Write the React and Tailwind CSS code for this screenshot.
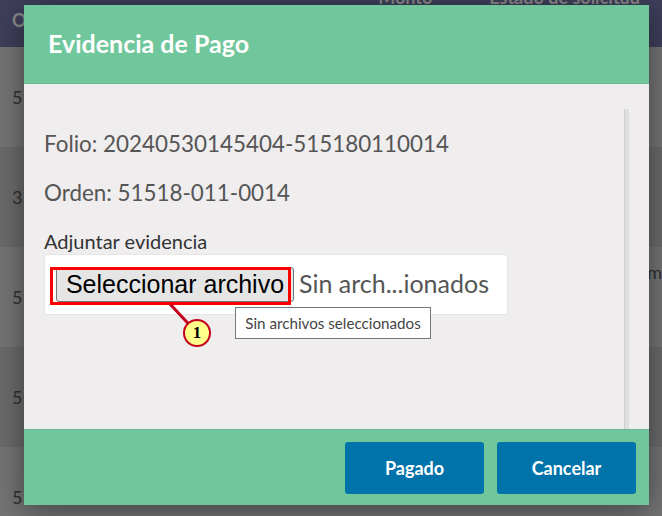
const rows = [
  { id: "5", bg: "bg-[#747474]" },
  { id: "3", bg: "bg-[#6b6b6b]" },
  { id: "5", bg: "bg-[#747474]", extra: "m" },
  { id: "5", bg: "bg-[#6b6b6b]" },
  { id: "5", bg: "bg-[#747474]" },
];

function BackgroundTable() {
  return (
    <div className="h-[516px] w-[662px] overflow-hidden font-['Lato',sans-serif]">
      <div className="flex h-[47px] bg-[#3f3f5c] text-[18px] font-bold text-[#8a8a8a]">
        <span className="pl-[12px] pt-[9px] leading-[22px]">O</span>
        <span className="ml-auto mt-[-14px] leading-[22px]">Monto</span>
        <span className="ml-[57px] mr-[22px] mt-[-14px] leading-[22px]">Estado de solicitud</span>
      </div>
      {rows.map((row, index) => (
        <div key={index} className={`flex h-[100px] items-center justify-between text-[18px] text-[#2f2f2f] ${row.bg}`}>
          <span className="pl-[12px]">{row.id}</span>
          {row.extra && <span className="mt-[-50px]">{row.extra}</span>}
        </div>
      ))}
    </div>
  );
}

function Callout() {
  return (
    <>
      <div className="absolute left-[50px] top-[267px] h-[38px] w-[241px] border-[3px] border-[#ff0000]" />
      <svg className="absolute left-[160px] top-[300px]" width="60" height="50" viewBox="0 0 60 50">
        <line x1="10" y1="4" x2="37" y2="33" stroke="#c4001a" strokeWidth="3" />
      </svg>
      <div className="absolute left-[183px] top-[319px] flex h-[28px] w-[28px] items-center justify-center rounded-full border-2 border-[#c4001a] bg-[#ffff8c] font-['Liberation_Serif',serif] text-[17px] font-bold text-black">
        1
      </div>
    </>
  );
}

export default function App() {
  return (
    <div className="relative h-[516px] w-[662px] overflow-hidden bg-[#6b6b6b]">
      <BackgroundTable />

      <div className="absolute left-[24px] top-[5px] flex h-[500px] w-[625px] flex-col rounded-t-[3px] bg-[#efedee] font-['Lato',sans-serif] shadow-[0_5px_30px_rgba(0,0,0,0.45)]">
        <div className="flex h-[79px] shrink-0 items-center border-b border-[#66b98f] bg-[#70c79c] pl-[24px] text-[25px] font-bold text-white">
          Evidencia de Pago
        </div>

        <div className="flex min-h-0 flex-1 pl-[20px] pr-[20px] pt-[25px]">
          <div className="min-w-0 flex-1">
            <p className="mt-[20px] text-[22.4px] leading-[30px] text-[#555555]">Folio: 20240530145404-515180110014</p>
            <p className="mt-[19px] text-[22.4px] leading-[30px] text-[#555555]">Orden: 51518-011-0014</p>
            <p className="mt-[22px] text-[20px] leading-[22px] text-[#333333]">Adjuntar evidencia</p>
            <div className="mt-[2px] flex h-[61px] w-[464px] items-center rounded-[4px] border border-[#e6e6e6] bg-white pl-[11px]">
              <button className="h-[35px] w-[238px] rounded-[3px] border border-[#767676] bg-[#e5e5e5] font-['Liberation_Sans',sans-serif] text-[25px] leading-none text-black">
                Seleccionar archivo
              </button>
              <span className="mb-[2px] ml-[5px] text-[25px] text-[#555555]">Sin arch...ionados</span>
            </div>
          </div>
          <div className="w-[5px] shrink-0 bg-[#dfdfdf] border-l border-[#cfcfcf]" />
        </div>

        <div className="flex h-[76px] shrink-0 items-start justify-end gap-[13px] border-t border-[#66b98f] bg-[#70c79c] pr-[13px] pt-[12px]">
          <button className="h-[52px] w-[139px] rounded-[3px] bg-[#0073aa] text-[18px] font-bold text-white">Pagado</button>
          <button className="h-[52px] w-[139px] rounded-[3px] bg-[#0073aa] text-[18px] font-bold text-white">Cancelar</button>
        </div>
      </div>

      <Callout />

      <div className="absolute left-[235px] top-[307px] flex h-[32px] w-[196px] items-center justify-center border border-[#767676] bg-white font-['Lato',sans-serif] text-[15.2px] text-[#444444]">
        Sin archivos seleccionados
      </div>
    </div>
  );
}
